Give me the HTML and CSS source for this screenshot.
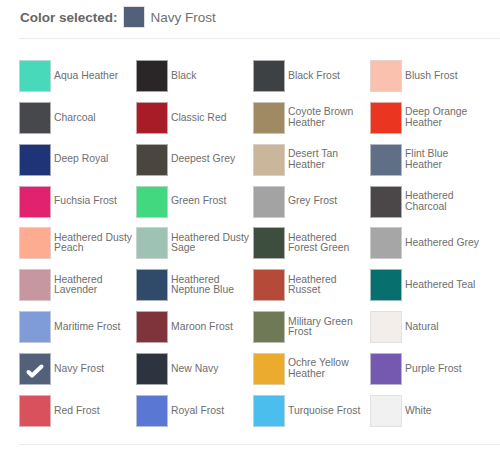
FILE: index.html
```html
<!DOCTYPE html>
<html lang="en">
<head>
    <meta charset="UTF-8">
    <meta name="viewport" content="width=device-width, initial-scale=1.0">
    <title>Color Picker</title>
    <link rel="stylesheet" href="styles.css">
</head>
<body>

<div class="picker">
    <div class="picker-header">
        <span class="picker-title">Color selected:</span>
        <span class="picker-current" id="current-swatch"></span>
        <span class="picker-name" id="current-name"></span>
    </div>

    <div class="swatch-grid" id="swatch-grid">
        <!-- Swatches are generated below -->
    </div>
</div>

<script>
    const colors = [
        { name: 'Aqua Heather', hex: '#47d9b9' },
        { name: 'Black', hex: '#2a2627' },
        { name: 'Black Frost', hex: '#3e4144' },
        { name: 'Blush Frost', hex: '#fbc1af' },
        { name: 'Charcoal', hex: '#46484b' },
        { name: 'Classic Red', hex: '#a81c27' },
        { name: 'Coyote Brown Heather', hex: '#a08a63' },
        { name: 'Deep Orange Heather', hex: '#ea3621' },
        { name: 'Deep Royal', hex: '#1f3476' },
        { name: 'Deepest Grey', hex: '#4a463f' },
        { name: 'Desert Tan Heather', hex: '#c9b69b' },
        { name: 'Flint Blue Heather', hex: '#5e6f86' },
        { name: 'Fuchsia Frost', hex: '#e0226f' },
        { name: 'Green Frost', hex: '#41d880' },
        { name: 'Grey Frost', hex: '#a3a3a3' },
        { name: 'Heathered Charcoal', hex: '#4b4748' },
        { name: 'Heathered Dusty Peach', hex: '#fdab91' },
        { name: 'Heathered Dusty Sage', hex: '#9ec3b4' },
        { name: 'Heathered Forest Green', hex: '#3d4d3e' },
        { name: 'Heathered Grey', hex: '#a6a6a6' },
        { name: 'Heathered Lavender', hex: '#c696a1' },
        { name: 'Heathered Neptune Blue', hex: '#304b69' },
        { name: 'Heathered Russet', hex: '#b54a38' },
        { name: 'Heathered Teal', hex: '#076f6e' },
        { name: 'Maritime Frost', hex: '#7f9bd8' },
        { name: 'Maroon Frost', hex: '#7e343a' },
        { name: 'Military Green Frost', hex: '#6f7956' },
        { name: 'Natural', hex: '#f3eeea' },
        { name: 'Navy Frost', hex: '#52607a' },
        { name: 'New Navy', hex: '#2d333f' },
        { name: 'Ochre Yellow Heather', hex: '#eaab2f' },
        { name: 'Purple Frost', hex: '#7559b0' },
        { name: 'Red Frost', hex: '#d9515d' },
        { name: 'Royal Frost', hex: '#5b77d4' },
        { name: 'Turquoise Frost', hex: '#4cbeee' },
        { name: 'White', hex: '#f1f1f1' }
    ];

    let selected = 'Navy Frost';

    const checkIcon = `
        <svg class="swatch-check" viewBox="0 0 32 32" width="32" height="32">
            <polyline points="9.5,19 13,22.5 22.5,13.5" fill="none" stroke="#fff"
                      stroke-width="4" stroke-linecap="round" stroke-linejoin="round"/>
        </svg>`;

    function renderSwatches() {
        const grid = document.getElementById('swatch-grid');
        grid.innerHTML = '';
        colors.forEach(color => {
            const item = document.createElement('div');
            item.classList.add('swatch-item');
            item.innerHTML = `
                <span class="swatch" style="background-color: ${color.hex}">
                    ${color.name === selected ? checkIcon : ''}
                </span>
                <span class="swatch-label">${color.name}</span>
            `;
            item.onclick = () => selectColor(color.name);
            grid.appendChild(item);
        });
    }

    function selectColor(name) {
        selected = name;
        const color = colors.find(c => c.name === name);
        document.getElementById('current-swatch').style.backgroundColor = color.hex;
        document.getElementById('current-name').textContent = color.name;
        renderSwatches();
    }

    selectColor(selected);
</script>

</body>
</html>
```

FILE: styles.css
```css
body {
    font-family: 'Liberation Sans', Arial, sans-serif;
    margin: 0;
    padding: 0;
    background-color: #fff;
    color: #6b6b6b;
}
.picker {
    margin-left: 19px;
}
.picker-header {
    display: flex;
    align-items: center;
    padding: 6px 0 10px 1px;
    border-bottom: 1px solid #ececec;
}
.picker-title {
    font-size: 13.5px;
    font-weight: bold;
    color: #666;
}
.picker-current {
    width: 20px;
    height: 20px;
    margin: 0 6px 0 5px;
    border: 1px solid #e0e0e0;
}
.picker-name {
    font-size: 13.5px;
    color: #707070;
}
.swatch-grid {
    display: grid;
    grid-template-columns: repeat(4, 117px);
    row-gap: 9.85px;
    padding: 21px 0 17px;
    border-bottom: 1px solid #ececec;
}
.swatch-item {
    display: flex;
    align-items: center;
    gap: 3px;
    cursor: pointer;
}
.swatch {
    flex: none;
    position: relative;
    width: 30px;
    height: 30px;
    border: 1px solid rgba(220, 220, 220, 0.7);
}
.swatch-check {
    position: absolute;
    top: -1px;
    left: -1px;
}
.swatch-label {
    max-width: 79px;
    font-size: 10.4px;
    line-height: 10.5px;
    color: #6e6e6e;
}
```
